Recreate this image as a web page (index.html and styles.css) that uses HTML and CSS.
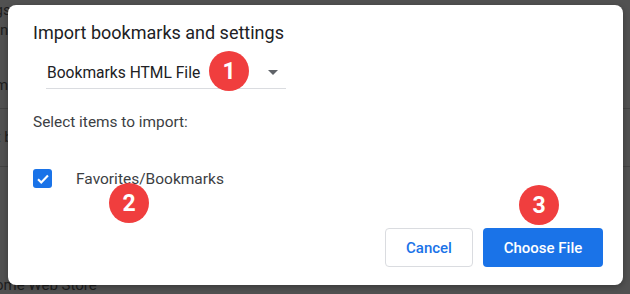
FILE: index.html
```html
<!DOCTYPE html>
<html lang="en">
<head>
    <meta charset="UTF-8">
    <title>Import bookmarks and settings</title>
    <link rel="stylesheet" href="styles.css">
</head>
<body>
    <div class="page">
        <div class="page-row">Settings</div>
        <div class="page-row">Sync and Google services</div>
        <div class="page-row gap">Customise your Chrome profile</div>
        <div class="page-row line">Import bookmarks and settings</div>
        <div class="page-row line tall"></div>
        <div class="page-row bottom">Chrome Web Store</div>
    </div>

    <div class="scrim">
        <div class="dialog">
            <h1 class="title">Import bookmarks and settings</h1>

            <div class="select">
                <span>Bookmarks HTML File</span>
                <span class="caret"></span>
            </div>

            <p class="label">Select items to import:</p>

            <label class="check-row">
                <span class="checkbox">
                    <svg width="14" height="14" viewBox="0 0 24 24"><path d="M3.5 12.5l5.5 5.5L20.5 6" fill="none" stroke="#fff" stroke-width="3.6"/></svg>
                </span>
                Favorites/Bookmarks
            </label>

            <div class="actions">
                <button class="btn btn-cancel">Cancel</button>
                <button class="btn btn-primary">Choose File</button>
            </div>

            <span class="badge badge-1">1</span>
            <span class="badge badge-2">2</span>
            <span class="badge badge-3">3</span>
        </div>
    </div>
</body>
</html>
```

FILE: styles.css
```css
body {
    margin: 0;
    font-family: Roboto, 'Liberation Sans', sans-serif;
    background-color: #515151;
    width: 630px;
    height: 294px;
    overflow: hidden;
    position: relative;
}

/* page behind the dialog */
.page {
    margin-left: -44px;
    color: #1e1e1e;
    font-size: 15px;
}

.page-row {
    height: 20px;
    line-height: 20px;
}

.page-row.gap {
    margin-top: 35px;
}

.page-row.line {
    border-top: 1px solid #434343;
    margin-top: 13px;
    padding-top: 18px;
    height: 26px;
}

.page-row.tall {
    height: 80px;
    padding-top: 0;
}

.page-row.bottom {
    margin-top: 28px;
    padding-left: 16px;
}

.scrim {
    position: absolute;
    inset: 0;
}

.dialog {
    position: absolute;
    left: 8px;
    top: 5px;
    width: 615px;
    height: 280px;
    box-sizing: border-box;
    padding: 18px 20px 18px 25px;
    background-color: #fff;
    border-radius: 8px;
    box-shadow: 0 2px 6px rgba(0, 0, 0, 0.3);
    display: flex;
    flex-direction: column;
}

.title {
    margin: 0;
    font-size: 18px;
    font-weight: 400;
    line-height: 20px;
    color: #202124;
}

.select {
    margin: 14px 0 0 13px;
    width: 240px;
    height: 32px;
    box-sizing: border-box;
    padding: 0 8px 0 1px;
    border-bottom: 1px solid #dadce0;
    display: flex;
    align-items: center;
    justify-content: space-between;
    font-size: 15.6px;
    color: #202124;
}

.caret {
    width: 0;
    height: 0;
    border-left: 5.5px solid transparent;
    border-right: 5.5px solid transparent;
    border-top: 5.5px solid #5f6368;
}

.label {
    margin: 23px 0 0;
    font-size: 15.4px;
    line-height: 20px;
    color: #3c4043;
}

.check-row {
    margin-top: 37px;
    display: flex;
    align-items: center;
    gap: 24px;
    font-size: 15.5px;
    color: #3c4043;
}

.checkbox {
    width: 19px;
    height: 19px;
    border-radius: 3px;
    background-color: #1a73e8;
    display: flex;
    align-items: center;
    justify-content: center;
}

.actions {
    margin-top: auto;
    display: flex;
    justify-content: flex-end;
    gap: 10px;
}

.btn {
    height: 39px;
    border-radius: 4px;
    font-family: Roboto, 'Liberation Sans', sans-serif;
    font-size: 15px;
    font-weight: 500;
    cursor: pointer;
}

.btn-cancel {
    width: 88px;
    background-color: #fff;
    border: 1px solid #dadce0;
    color: #1a73e8;
}

.btn-primary {
    width: 120px;
    background-color: #1a73e8;
    border: none;
    color: #fff;
}

/* numbered callouts */
.badge {
    position: absolute;
    width: 40px;
    height: 40px;
    border-radius: 50%;
    background-color: #f03e3e;
    color: #fff;
    font-size: 23px;
    font-weight: 700;
    display: flex;
    align-items: center;
    justify-content: center;
}

.badge-1 { left: 201px; top: 46px; }
.badge-2 { left: 101px; top: 178px; }
.badge-3 { left: 511px; top: 180px; }
```
